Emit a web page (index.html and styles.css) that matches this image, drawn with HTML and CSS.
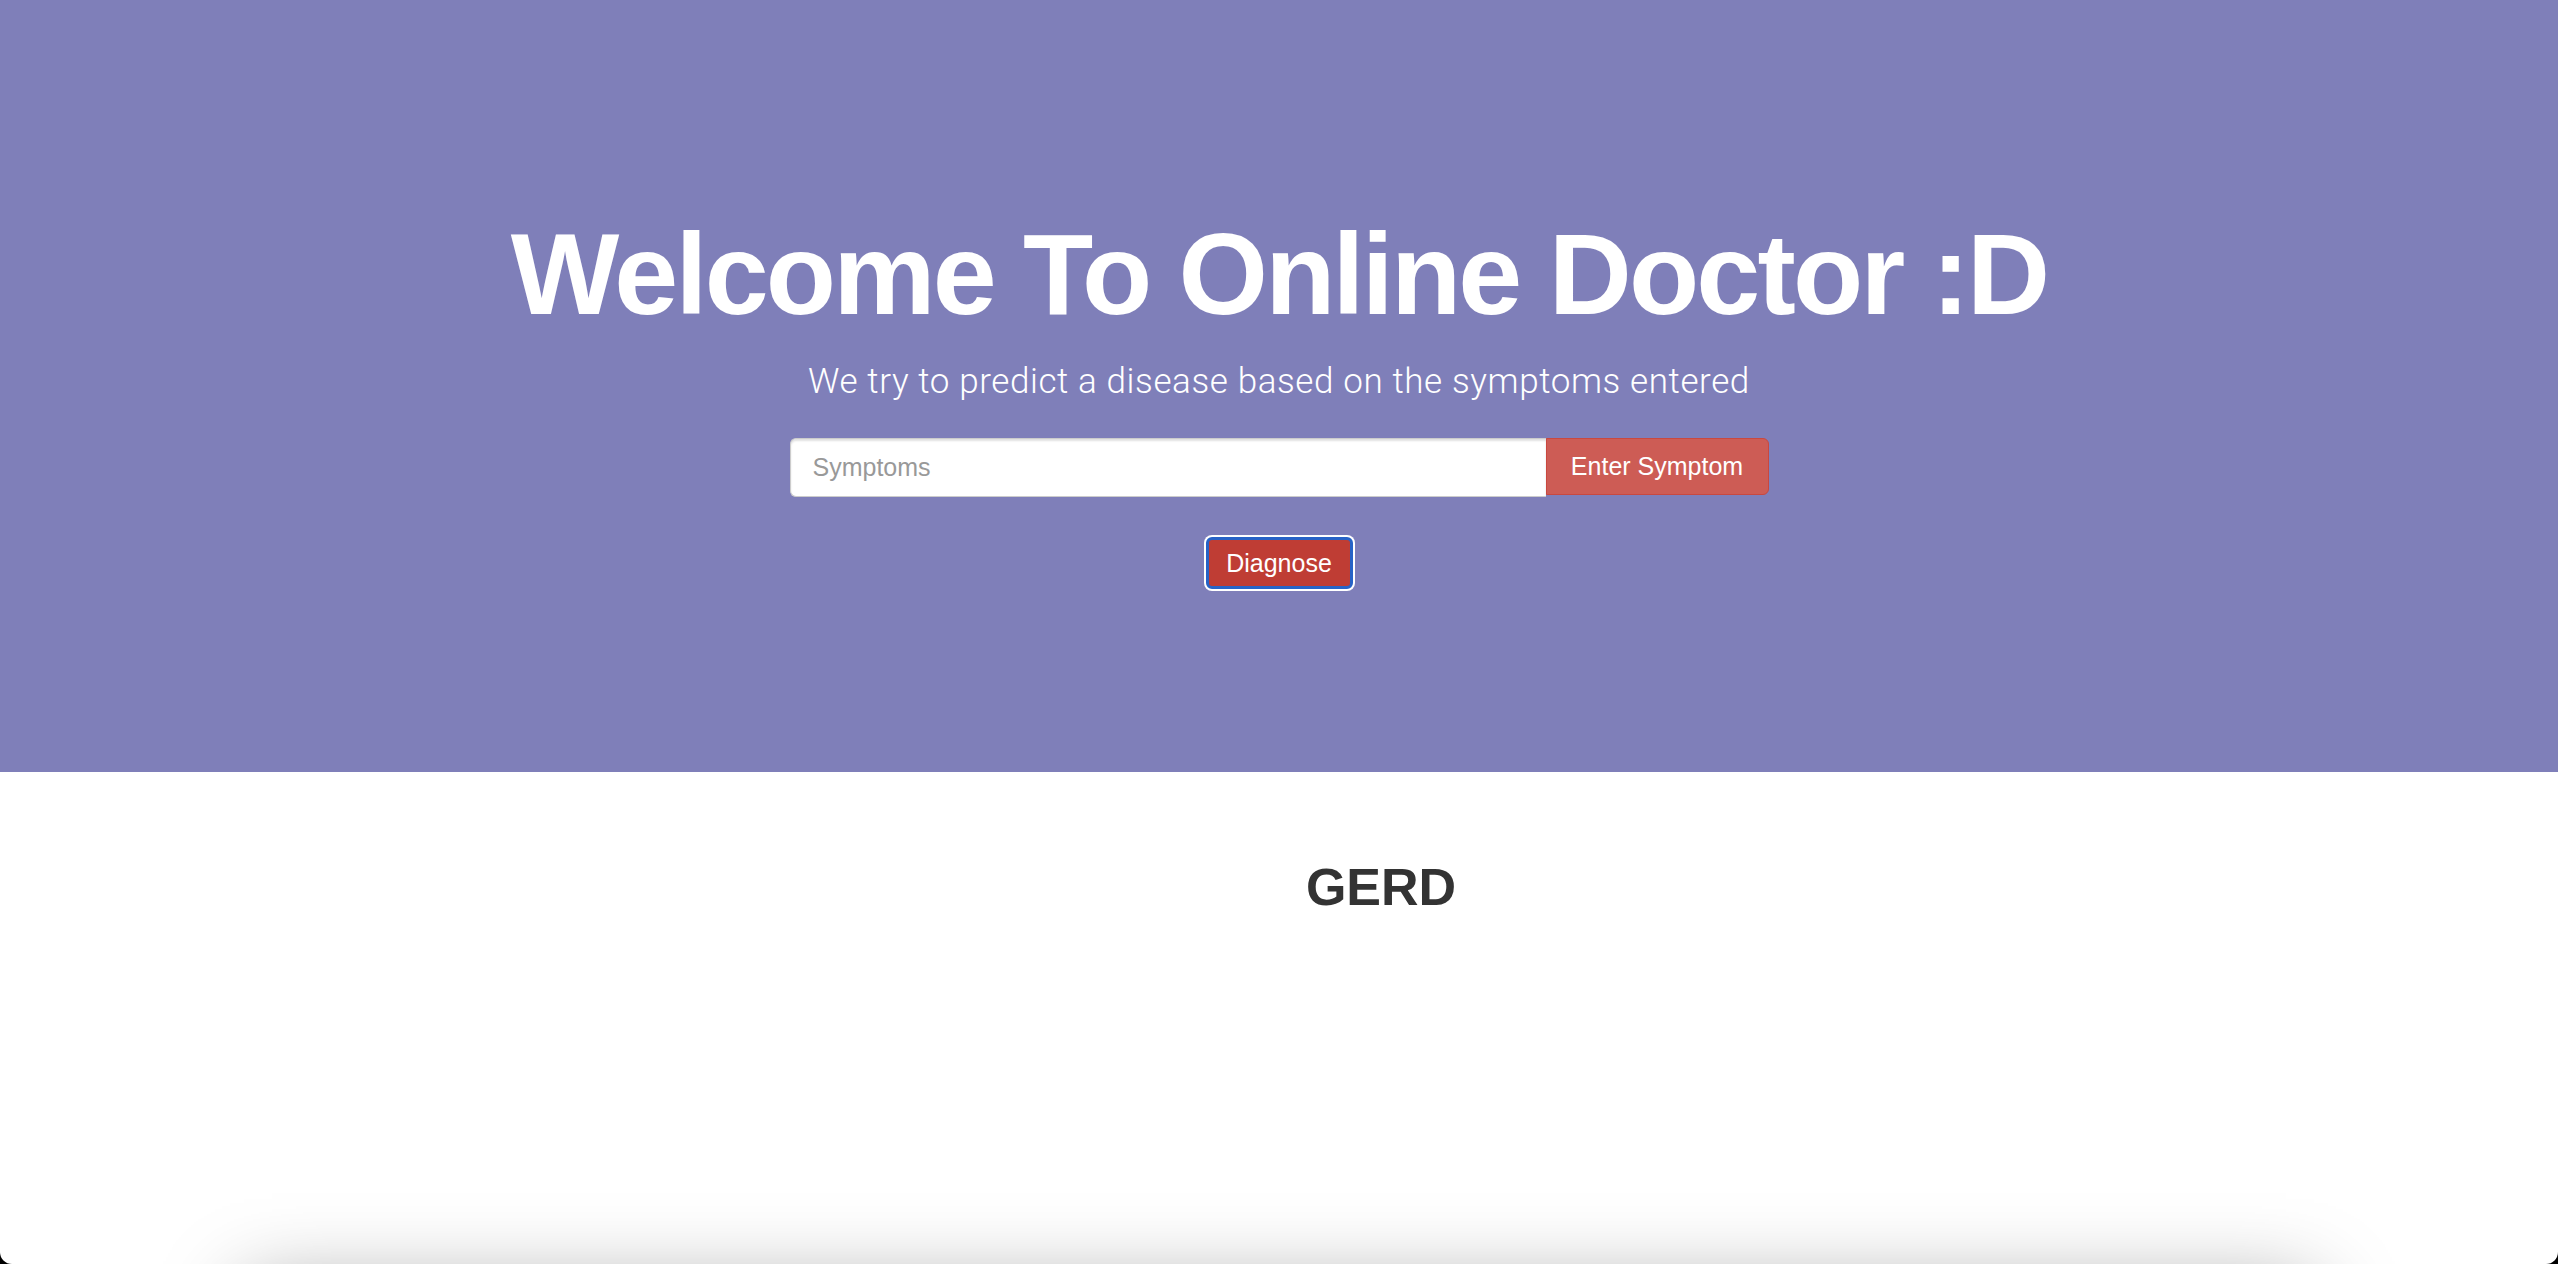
FILE: index.html
```html
<!DOCTYPE html>
<html lang="en">
<head>
<meta charset="utf-8">
<title>Online Doctor</title>
<link rel="stylesheet" href="styles.css">
</head>
<body>
<div class="window">
  <header class="jumbo">
    <h1 class="title">Welcome To Online Doctor :D</h1>
    <p class="lead">We try to predict a disease based on the symptoms entered</p>
    <form class="input-group">
      <input class="symptom-input" type="text" placeholder="Symptoms">
      <button class="btn-enter" type="button">Enter Symptom</button>
    </form>
    <button class="btn-diagnose" type="button">Diagnose</button>
  </header>
  <section class="result">
    <h2 class="result-title">GERD</h2>
  </section>
  <div class="card"></div>
</div>
</body>
</html>
```

FILE: styles.css
```css
html, body {
  margin: 0;
  padding: 0;
  background: #000;
}

.window {
  height: 1264px;
  overflow: hidden;
  background: #fff;
  border-radius: 0 0 12px 12px;
  font-family: "Liberation Sans", Arial, sans-serif;
}

.jumbo {
  height: 772px;
  box-sizing: border-box;
  padding-top: 211px;
  background: #7f7fb9;
  display: flex;
  flex-direction: column;
  align-items: center;
  color: #fff;
}

.title {
  margin: 0;
  font-size: 115px;
  line-height: 127px;
  font-weight: 700;
  letter-spacing: -2.8px;
}

.lead {
  margin: 19px 0 32px;
  font-family: "Roboto", "Liberation Sans", sans-serif;
  font-weight: 300;
  font-size: 35px;
  line-height: 49px;
  letter-spacing: 0.6px;
}

.input-group {
  display: flex;
  width: 979px;
  height: 59px;
  margin: 0 0 40px;
}

.symptom-input {
  flex: 1;
  min-width: 0;
  box-sizing: border-box;
  height: 59px;
  margin: 0;
  padding: 0 22px;
  border: 1px solid #ccc;
  border-right: none;
  border-radius: 6px 0 0 6px;
  box-shadow: inset 0 2px 2px rgba(0, 0, 0, 0.12);
  font-family: "Liberation Sans", Arial, sans-serif;
  font-size: 25px;
  color: #555;
  background: #fff;
  outline: none;
}

.symptom-input::placeholder {
  color: #999;
}

.btn-enter {
  width: 223px;
  height: 57px;
  box-sizing: border-box;
  margin: 0;
  padding: 0;
  border: 1px solid #c9483f;
  border-radius: 0 6px 6px 0;
  background: #cd5c55;
  color: #fff;
  font-family: "Liberation Sans", Arial, sans-serif;
  font-size: 25px;
}

.btn-diagnose {
  width: 147px;
  height: 52px;
  box-sizing: border-box;
  margin: 0;
  padding: 0;
  border: 3px solid #2763c6;
  border-radius: 6px;
  box-shadow: 0 0 0 2px #fff;
  background: #bf3d34;
  color: #fff;
  font-family: "Liberation Sans", Arial, sans-serif;
  font-size: 25px;
}

.result {
  height: 518px;
  box-sizing: border-box;
  padding: 87px 0 0 204px;
  text-align: center;
}

.result-title {
  margin: 0;
  font-size: 52px;
  line-height: 57px;
  font-weight: 700;
  color: #333;
}

.card {
  width: 2070px;
  height: 400px;
  margin: 0 auto;
  background: #fff;
  box-shadow: 0 0 80px rgba(0, 0, 0, 0.4);
}
```
